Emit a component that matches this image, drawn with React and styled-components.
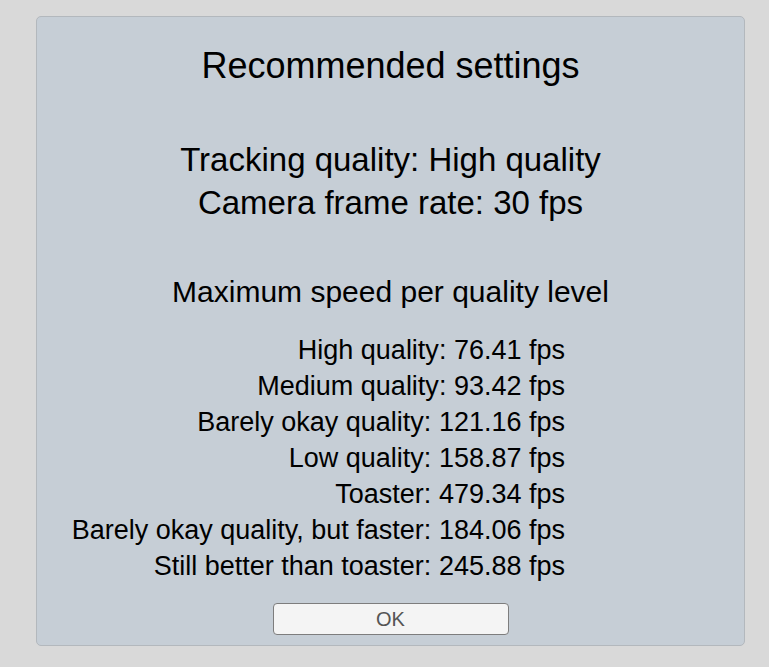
import React from "react";
import styled, { createGlobalStyle } from "styled-components";

const GlobalStyle = createGlobalStyle`
  html, body {
    margin: 0;
    padding: 0;
    background: #d9d9d9;
    font-family: "Liberation Sans", Arial, sans-serif;
  }
`;

const Panel = styled.div`
  margin: 16px 24px 21px 36px;
  height: 630px;
  box-sizing: border-box;
  background: #c6ced6;
  border: 1px solid #b3b8bd;
  border-radius: 5px;
  display: flex;
  flex-direction: column;
  align-items: center;
  padding: 28px 0 10px;
  color: #000;
`;

const Title = styled.h1`
  margin: 0;
  font-size: 36px;
  font-weight: normal;
  line-height: 42px;
`;

const Recommended = styled.div`
  margin-top: 51px;
  font-size: 33px;
  line-height: 43px;
  text-align: center;
`;

const SectionTitle = styled.h2`
  margin: 50px 0 0;
  font-size: 30px;
  font-weight: normal;
  line-height: 36px;
`;

const SpeedList = styled.div`
  margin-top: 22px;
  align-self: stretch;
  padding-right: 179px;
  text-align: right;
  font-size: 27px;
  line-height: 36px;
`;

const Row = styled.div`
  white-space: nowrap;
`;

const OkButton = styled.button`
  margin-top: auto;
  width: 236px;
  height: 32px;
  border: 1px solid #7d7d7d;
  border-radius: 4px;
  background: #f4f4f4;
  color: #555;
  font-family: "Liberation Sans", Arial, sans-serif;
  font-size: 20px;
  padding: 0;
`;

const speeds = [
  ["High quality", "76.41"],
  ["Medium quality", "93.42"],
  ["Barely okay quality", "121.16"],
  ["Low quality", "158.87"],
  ["Toaster", "479.34"],
  ["Barely okay quality, but faster", "184.06"],
  ["Still better than toaster", "245.88"],
];

const App = () => {
  return (
    <>
      <GlobalStyle />
      <Panel>
        <Title>Recommended settings</Title>
        <Recommended>
          <div>Tracking quality: High quality</div>
          <div>Camera frame rate: 30 fps</div>
        </Recommended>
        <SectionTitle>Maximum speed per quality level</SectionTitle>
        <SpeedList>
          {speeds.map(([name, fps]) => (
            <Row key={name}>
              {name}: {fps} fps
            </Row>
          ))}
        </SpeedList>
        <OkButton>OK</OkButton>
      </Panel>
    </>
  );
};

export default App;
